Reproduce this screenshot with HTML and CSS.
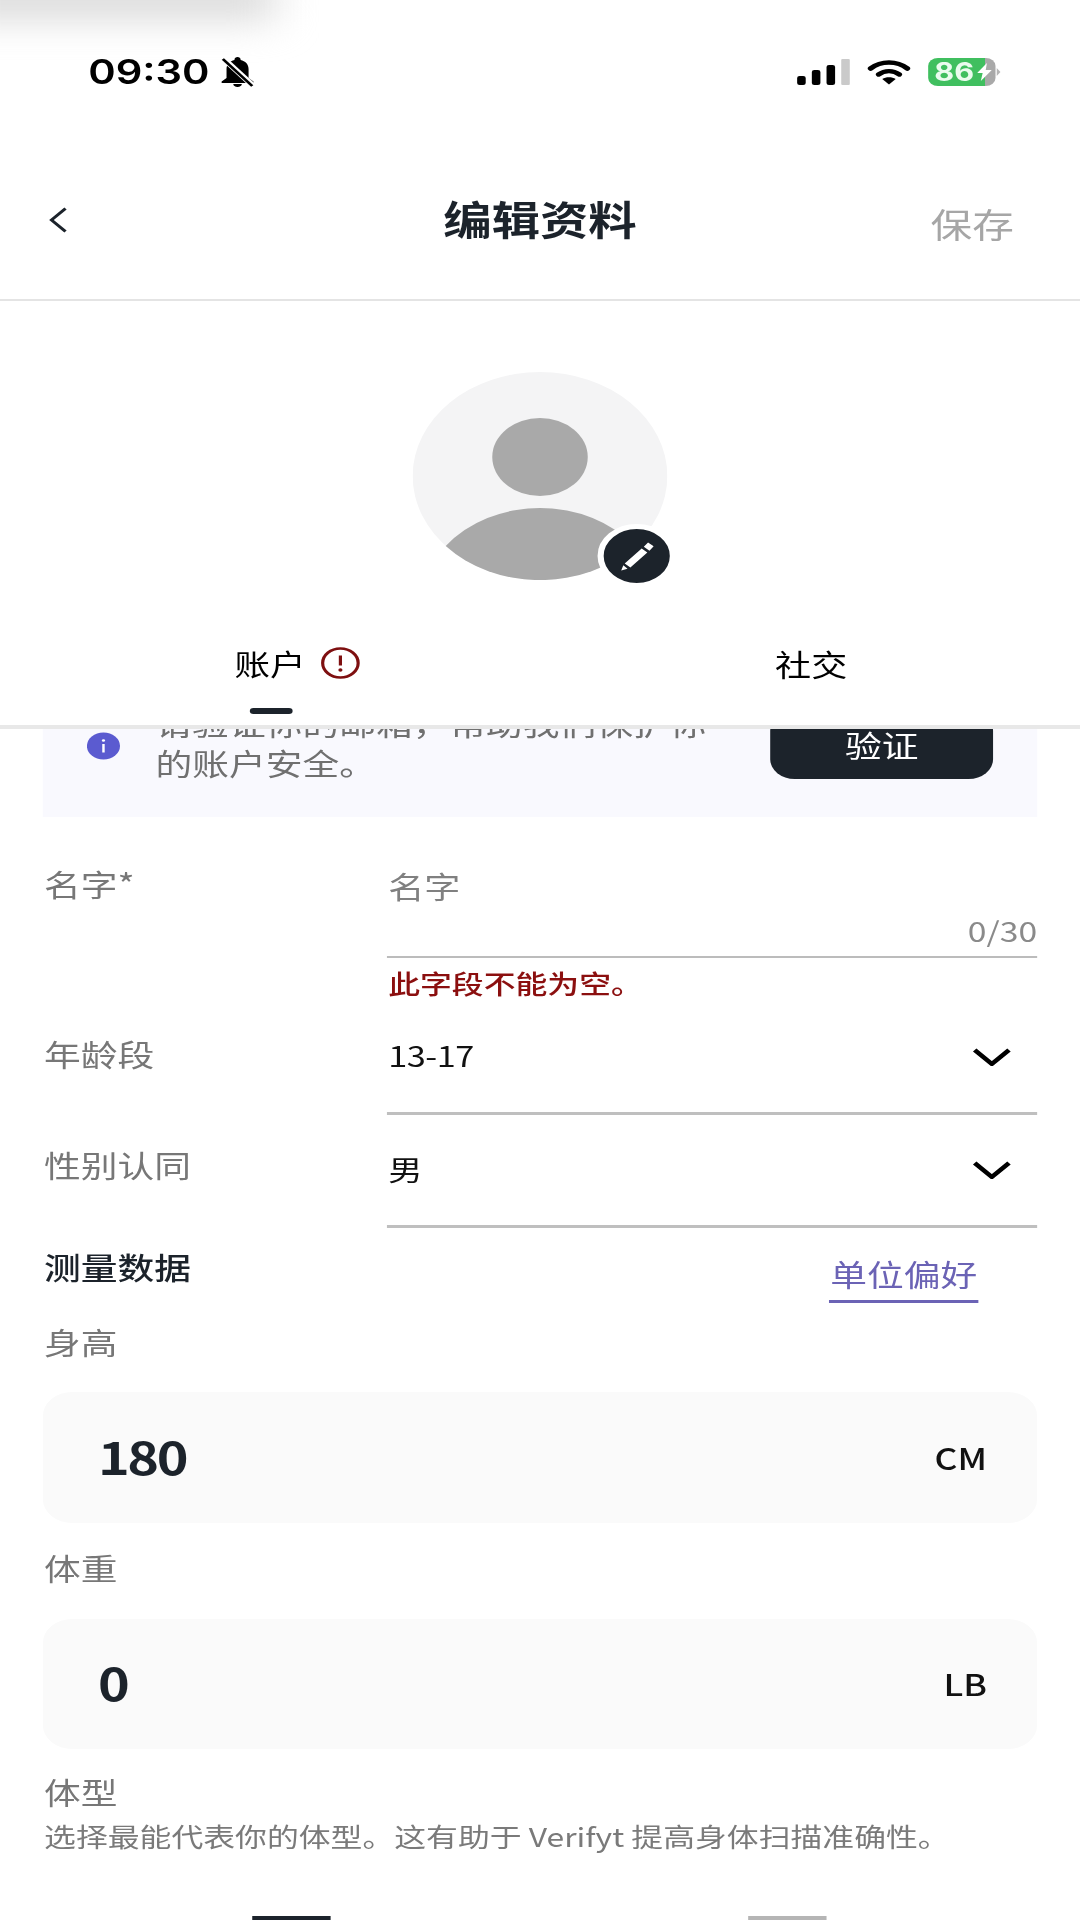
FILE: index.html
```html
<!DOCTYPE html>
<html lang="zh-CN">
<head>
<meta charset="utf-8">
<title>编辑资料</title>
<link rel="stylesheet" href="styles.css">
</head>
<body>
<div class="page">
  <div class="smudge"></div>
  <header class="status">
    <div class="status-left">
      <span class="time">09:30</span>
      <svg class="bell" viewBox="0 0 28 30"><path d="M14 30c2 0 3.500-1.400 3.500-3h-7c0 1.600 1.500 3 3.500 3zM23 21v-9c0-4.800-2.700-8-6.500-9V2.500C16.500 1.100 15.400 0 14 0s-2.500 1.100-2.500 2.500V3C7.700 4 5 7.200 5 12v9l-4 3.500V26h26v-1.500z" fill="#000"/><path d="M2 1l24 27" stroke="#fff" stroke-width="5"/><path d="M2 2l24 27" stroke="#000" stroke-width="2.400"/></svg>
    </div>
    <div class="status-right">
      <div class="signal"><i class="bar b1"></i><i class="bar b2"></i><i class="bar b3"></i><i class="bar b4"></i></div>
      <svg class="wifi" viewBox="0 0 36 26"><path d="M3 9.500C11.500 1.500 24.500 1.500 33 9.500" fill="none" stroke="#000" stroke-width="4.600" stroke-linecap="round"/><path d="M9.500 15.500C14.500 11 21.500 11 26.500 15.500" fill="none" stroke="#000" stroke-width="4.400" stroke-linecap="round"/><path d="M12.500 20L18 25.500 23.500 20C20.500 17.500 15.500 17.500 12.500 20z" fill="#000"/></svg>
      <div class="battery">
        <span class="battery-num">86</span>
        <svg class="bolt" viewBox="0 0 12 18"><path d="M8 0L0 10h4.500L3 18l9-11H7z" fill="#fff"/></svg>
      </div>
      <i class="battery-cap"></i>
    </div>
  </header>

  <nav class="nav">
    <svg class="back" viewBox="0 0 15 26"><path d="M13.500 1.500L2 13l11.500 11.500" fill="none" stroke="#1c232b" stroke-width="2.600"/></svg>
    <h1 class="title">编辑资料</h1>
    <span class="save">保存</span>
  </nav>

  <section class="profile">
    <div class="avatar">
      <svg class="avatar-art" viewBox="0 0 208 208">
        <circle cx="104" cy="104" r="104" fill="#f4f4f5"/>
        <circle cx="104" cy="85" r="39" fill="#a9a9a9"/>
        <path d="M27 174A97 97 0 0 1 181 174A104 104 0 0 1 27 174Z" fill="#a9a9a9"/>
      </svg>
      <div class="edit-badge">
        <svg class="pencil" viewBox="0 0 24 26"><path d="M17 5L20 1.200 24 4.500 21 8.500zM15.500 6.500L19.500 10 7.500 23 3.500 19.500zM2.500 21L5.500 24 1 25.500z" fill="#fff"/></svg>
      </div>
    </div>
    <div class="tabs">
      <div class="tab">
        <span class="tab-label">账户<svg class="alert" viewBox="0 0 32 32"><circle cx="16" cy="16" r="14.500" fill="none" stroke="#7e0f10" stroke-width="2.600"/><path d="M16 8.500v10" stroke="#7e0f10" stroke-width="2.600"/><circle cx="16" cy="23" r="1.700" fill="#7e0f10"/></svg></span>
        <i class="tab-ind"></i>
      </div>
      <div class="tab">
        <span class="tab-label">社交</span>
      </div>
    </div>
  </section>

  <main class="content">
    <div class="banner">
      <svg class="info" viewBox="0 0 27 28"><circle cx="13.500" cy="14" r="13.500" fill="#5b5bd0"/><path d="M13.500 12v8.500" stroke="#fff" stroke-width="2"/><circle cx="13.500" cy="8.500" r="1.300" fill="#fff"/></svg>
      <p class="banner-text">请验证你的邮箱，帮助我们保护你的账户安全。</p>
      <button class="verify">验证</button>
    </div>

    <div class="row row-name">
      <span class="label">名字*</span>
      <div>
        <div class="field">
          <div class="placeholder">名字</div>
          <div class="counter">0/30</div>
        </div>
        <div class="error">此字段不能为空。</div>
      </div>
    </div>

    <div class="row row-age">
      <span class="label">年龄段</span>
      <div class="select">
        <span class="value value-num">13-17</span>
        <svg class="chev" viewBox="0 0 32 18"><path d="M2 2l14 14L30 2" fill="none" stroke="#000" stroke-width="4"/></svg>
      </div>
    </div>

    <div class="row row-gender">
      <span class="label">性别认同</span>
      <div class="select">
        <span class="value">男</span>
        <svg class="chev" viewBox="0 0 32 18"><path d="M2 2l14 14L30 2" fill="none" stroke="#000" stroke-width="4"/></svg>
      </div>
    </div>

    <div class="measure-head">
      <span class="measure-title">测量数据</span>
      <a class="unit-link">单位偏好</a>
    </div>

    <div class="label label-height">身高</div>
    <div class="card card-height">
      <span class="num">180</span>
      <span class="unit">CM</span>
    </div>

    <div class="label label-weight">体重</div>
    <div class="card card-weight">
      <span class="num">0</span>
      <span class="unit">LB</span>
    </div>

    <div class="label label-type">体型</div>
    <p class="desc">选择最能代表你的体型。这有助于 Verifyt 提高身体扫描准确性。</p>

    <div class="type-row">
      <i class="type-thumb is-active"></i>
      <i class="type-thumb"></i>
    </div>
  </main>
</div>
</body>
</html>
```
FILE: styles.css
```css
* { box-sizing: border-box; }
html, body { margin: 0; padding: 0; height: 1920px; overflow: hidden; background: #fff; }
body { font-family: "Noto Sans CJK SC", "Noto Sans", sans-serif; color: #111; }
p, h1 { margin: 0; }
i { display: block; }

/* The capture is stretched horizontally: the phone layout is 882 wide */
.page {
  position: relative;
  width: 882px;
  height: 1920px;
  display: flex;
  flex-direction: column;
  overflow: hidden;
  background: #fff;
  transform: scaleX(1.22449);
  transform-origin: 0 0;
}

.smudge {
  position: absolute;
  left: -40px;
  top: -30px;
  width: 265px;
  height: 52px;
  background: #dedede;
  filter: blur(17px);
}

/* status bar */
.status {
  height: 130px;
  flex: none;
  display: flex;
  justify-content: space-between;
  align-items: flex-start;
  padding: 52px 65px 0 72px;
}
.status-left, .status-right { display: flex; align-items: center; height: 40px; }
.time { font-family: Inter, sans-serif; font-weight: 600; font-size: 34px; line-height: 40px; color: #000; }
.bell { width: 28px; height: 30px; margin-left: 9px; }
.signal { display: flex; align-items: flex-end; gap: 5px; height: 26px; }
.bar { width: 7px; background: #000; border-radius: 2px; }
.b1 { height: 9px; }
.b2 { height: 15px; }
.b3 { height: 20px; }
.b4 { height: 26px; background: #cacaca; border-radius: 1px; }
.wifi { width: 36px; height: 26px; margin-left: 14px; }
.battery {
  width: 55px;
  height: 28px;
  margin-left: 14px;
  border-radius: 8px;
  background: linear-gradient(90deg, #40bf5f 84%, #a9a9a9 84%);
  display: flex;
  align-items: center;
  padding-left: 5px;
}
.battery-num { font-family: Inter, sans-serif; font-weight: 700; font-size: 25px; line-height: 28px; color: #eafbee; }
.bolt { width: 12px; height: 18px; margin-left: 2px; }
.battery-cap {
  width: 0;
  height: 0;
  margin-left: 1px;
  border-left: 3px solid #b5b5b5;
  border-top: 4px solid transparent;
  border-bottom: 4px solid transparent;
}

/* nav */
.nav {
  height: 171px;
  flex: none;
  display: grid;
  grid-template-columns: 1fr auto 1fr;
  align-items: center;
  padding: 7px 54px 0;
  border-bottom: 2px solid #e4e4e4;
}
.back { width: 15px; height: 26px; margin: 3px 0 0 -14px; }
.title { font-size: 39.500px; line-height: 44px; font-weight: 700; color: #1c232b; }
.save { justify-self: end; font-size: 34px; line-height: 40px; color: #a6a6a6; margin-top: 12px; }

/* avatar and tabs */
.profile { flex: none; padding-top: 71px; }
.avatar { position: relative; width: 208px; height: 208px; margin: 0 auto; }
.avatar-art { display: block; width: 208px; height: 208px; }
.edit-badge {
  position: absolute;
  right: -7px;
  bottom: -8px;
  width: 64px;
  height: 64px;
  border: 5px solid #fff;
  border-radius: 50%;
  background: #1c232b;
  display: flex;
  align-items: center;
  justify-content: center;
}
.pencil { width: 28px; height: 30px; }
.tabs {
  display: grid;
  grid-template-columns: 1fr 1fr;
  height: 149px;
  border-bottom: 4px solid #e8e8e8;
  padding-top: 63px;
}
.tab { display: flex; flex-direction: column; align-items: center; }
.tab-label { position: relative; font-size: 29px; line-height: 40px; color: #000; }
.tab:last-child .tab-label { margin-left: 2px; font-size: 29.500px; }
.alert { position: absolute; left: 71px; top: 4px; width: 32px; height: 32px; }
.tab-ind { width: 35px; height: 6px; margin: 25px 0 0 2px; border-radius: 3px; background: #1c232b; }

/* scrolled content */
.content { flex: 1; min-height: 0; overflow: hidden; padding: 0 35px; }
.banner {
  margin-top: -29px;
  height: 117px;
  background: #f9f9fe;
  display: flex;
  align-items: flex-start;
  padding: 2px 36px 0;
}
.info { flex: none; width: 27px; height: 28px; margin-top: 30px; }
.banner-text { width: 470px; margin-left: 29px; font-size: 30px; line-height: 40px; color: #707070; }
.verify {
  flex: none;
  margin-left: auto;
  margin-top: 9px;
  width: 182px;
  height: 68px;
  border: 0;
  border-radius: 20px;
  background: #1c232b;
  color: #fff;
  font-family: inherit;
  font-size: 30px;
  line-height: 40px;
  padding: 0 0 3px;
}

.row { display: grid; grid-template-columns: 281px 1fr; }
.label { padding-left: 1px; font-size: 30px; line-height: 40px; color: #777; }
.row-name { margin-top: 46px; }
.field { padding: 2px 0 9px; border-bottom: 2.500px solid #bcbcbc; }
.placeholder { font-size: 29.500px; line-height: 40px; color: #808080; padding-left: 1px; }
.counter { margin-top: 8px; font-size: 27.500px; line-height: 34px; color: #8a8a8a; text-align: right; }
.error { margin-top: 9.500px; padding-left: 1px; font-size: 26px; line-height: 30px; font-weight: 500; color: #8b0f0f; }

.row-age { margin-top: 35px; }
.row-gender { margin-top: 29px; }
.select {
  display: flex;
  justify-content: space-between;
  align-items: center;
  padding-right: 21px;
  padding-left: 1px;
  border-bottom: 3px solid #bfbfbf;
}
.row-age .select { padding-top: 2px; padding-bottom: 37px; }
.row-gender .select { padding-top: 5px; padding-bottom: 36px; }
.row-age .chev { margin-top: 5px; }
.row-gender .chev { margin-top: 2px; }
.value { font-size: 28px; line-height: 40px; color: #111; }
.value-num { letter-spacing: -0.400px; }
.chev { width: 32px; height: 18px; }

.measure-head { display: flex; justify-content: space-between; align-items: flex-start; margin-top: 18px; padding: 0 48px 0 1px; }
.measure-title { font-size: 30px; line-height: 40px; font-weight: 500; color: #1c232b; }
.unit-link {
  margin-top: 7px;
  padding: 0 1px 7px;
  font-size: 30px;
  line-height: 40px;
  color: #6b63b5;
  border-bottom: 3px solid #6b63b5;
}

.label-height { margin-top: 18px; }
.label-weight { margin-top: 24px; }
.label-type { margin-top: 22px; }
.card {
  display: flex;
  justify-content: space-between;
  align-items: center;
  padding: 0 41px 0 45px;
  background: #fafafa;
  border-radius: 24px;
}
.card-height { margin-top: 31px; height: 131px; }
.card-weight { margin-top: 32px; height: 130px; }
.num { font-size: 44px; line-height: 50px; font-weight: 700; letter-spacing: -2px; color: #1c232b; }
.unit { font-size: 29px; line-height: 40px; font-weight: 500; color: #111; }
.card-height .num { margin-bottom: 2px; }
.card-weight .num { margin-bottom: 4px; }
.card-weight .unit { margin-bottom: 2px; }

.desc { margin-top: 7px; padding-left: 1px; font-size: 26px; line-height: 36px; color: #7a7a7a; white-space: nowrap; }

.type-row { display: grid; grid-template-columns: repeat(2, 405px); justify-items: center; margin-top: 62px; }
.type-thumb { width: 64px; height: 4px; background: #b5b5b5; }
.type-thumb.is-active { background: #1c232b; }
```
